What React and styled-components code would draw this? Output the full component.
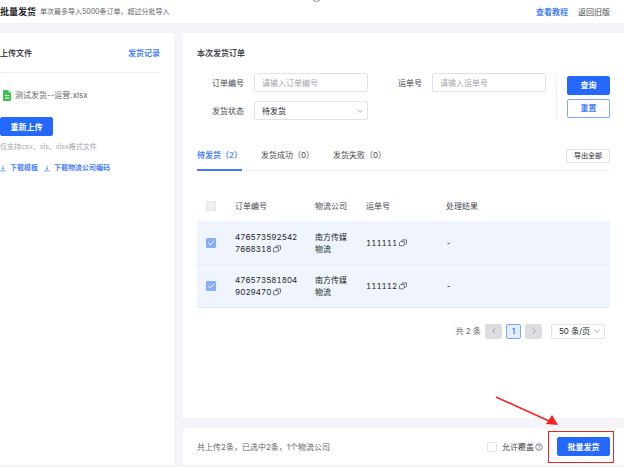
import React from "react";
import styled, { createGlobalStyle, css } from "styled-components";

const colors = {
  blue: "#2468fe",
  link: "#4a83f8",
  page: "#f4f4f9",
  text: "#45484d",
  dark: "#24272c",
  muted: "#64666b",
  placeholder: "#a2a4a9",
  border: "#e2e3e6",
  line: "#f0f0f2",
  selected: "#f0f4fc",
  red: "#fb2020",
};

const GlobalStyle = createGlobalStyle`
  * {
    box-sizing: border-box;
  }
  body {
    margin: 0;
    background: white;
    color: ${colors.text};
  }
  body, button, input, select {
    font-family: Inter, "Noto Sans CJK SC", sans-serif;
    font-size: 8px;
    line-height: 12px;
  }
  a {
    text-decoration: none;
  }
`;

const Page = styled.div`
  display: flex;
  flex-direction: column;
  min-height: 100vh;
  padding-right: 5px;
`;
const Header = styled.header`
  position: relative;
  display: flex;
  align-items: center;
  height: 23px;
  padding-right: 14px;
  overflow: hidden;
`;
const PageTitle = styled.h1`
  margin: 0 4px 0 0;
  font-size: 9px;
  font-weight: 600;
  color: ${colors.dark};
`;
const Subtitle = styled.span`
  flex: 1;
  font-size: 7px;
  color: ${colors.muted};
`;
const HeaderNav = styled.nav`
  display: flex;
  gap: 10px;
`;
const Link = styled.a`
  color: ${(props) => (props.$plain ? colors.text : colors.link)};
  font-weight: ${(props) => (props.$plain ? 400 : 600)};
`;
const Ring = styled.span`
  position: absolute;
  top: -7px;
  left: 50%;
  width: 9px;
  height: 9px;
  border: 1px solid #85878b;
  border-radius: 50%;
`;
const Body = styled.div`
  flex: 1;
  display: flex;
  gap: 9px;
  padding: 10px 0 2px;
  background: ${colors.page};
`;
const Sidebar = styled.aside`
  flex: none;
  width: 174px;
  padding-right: 14px;
  background: white;
`;
const SideHead = styled.div`
  display: flex;
  align-items: center;
  justify-content: space-between;
  height: 40px;
  border-bottom: 1px solid ${colors.line};
`;
const SectionTitle = styled.h2`
  margin: 0;
  font-size: 8px;
  font-weight: 600;
  color: ${colors.text};
`;
const FileRow = styled.div`
  display: flex;
  align-items: center;
  gap: 4px;
  height: 44px;
  padding-left: 3px;
  color: ${colors.muted};
`;
const Button = styled.button`
  display: block;
  width: ${(props) => (props.$wide ? "53px" : "43px")};
  height: 19px;
  padding: 0;
  border: 1px solid ${colors.blue};
  border-radius: 2px;
  background: ${colors.blue};
  color: white;
  font-weight: 600;
  ${(props) =>
    props.$outline &&
    css`
      border-color: #7fa6fa;
      background: white;
      color: ${colors.link};
    `}
`;
const Hint = styled.p`
  margin: 5px 0 9px;
  font-size: 7px;
  color: ${colors.placeholder};
`;
const Downloads = styled.div`
  display: flex;
  gap: 6px;
`;
const DownloadLink = styled.a`
  display: flex;
  align-items: center;
  gap: 4px;
  font-size: 7px;
  font-weight: 600;
  color: ${colors.link};
`;
const Main = styled.main`
  flex: 1;
  min-width: 0;
  display: flex;
  flex-direction: column;
  gap: 10px;
`;
const Card = styled.section`
  flex: 1;
  padding: 0 14px;
  background: white;
`;
const CardHead = styled.div`
  display: flex;
  align-items: center;
  height: 40px;
`;
const Search = styled.form`
  display: flex;
  gap: 10px;
`;
const Fields = styled.div`
  flex: 1;
  display: grid;
  grid-template-columns: 47px 1fr 44px 1fr;
  gap: 9px 10px;
  align-items: center;
`;
const Label = styled.label`
  text-align: right;
`;
const Input = styled.input`
  width: 100%;
  min-width: 0;
  height: 19px;
  padding: 0 7px;
  border: 1px solid ${colors.border};
  border-radius: 2px;
  color: ${colors.dark};
  &::placeholder {
    color: ${colors.placeholder};
  }
`;
const SelectBox = styled.div`
  display: grid;
  align-items: center;
  > * {
    grid-area: 1 / 1;
  }
  svg {
    justify-self: end;
    margin-right: 5px;
    pointer-events: none;
  }
`;
const Select = styled.select`
  appearance: none;
  width: 100%;
  height: ${(props) => (props.$small ? "15px" : "19px")};
  padding: 0 7px;
  border: 1px solid ${colors.border};
  border-radius: 2px;
  background: white;
  color: ${colors.dark};
`;
const Actions = styled.div`
  display: flex;
  flex-direction: column;
  justify-content: center;
  gap: 4px;
  padding-left: 10px;
  border-left: 1px solid ${colors.line};
`;
const TabBar = styled.div`
  display: flex;
  align-items: center;
  height: 30px;
  margin-top: 21px;
  border-bottom: 1px solid ${colors.line};
`;
const Tabs = styled.div`
  flex: 1;
  display: flex;
  gap: 19px;
`;
const Tab = styled.button`
  height: 31px;
  padding: 0;
  border: 0;
  border-bottom: 2px solid transparent;
  background: none;
  color: ${colors.text};
  white-space: nowrap;
  ${(props) =>
    props.$active &&
    css`
      border-color: #3f7bfa;
      color: ${colors.link};
      font-weight: 600;
    `}
`;
const ExportButton = styled.button`
  width: 44px;
  height: 14px;
  padding: 0;
  border: 1px solid ${colors.border};
  border-radius: 1px;
  background: white;
  color: ${colors.dark};
  font-size: 7px;
`;
const Table = styled.table`
  width: 100%;
  margin-top: 19px;
  border-collapse: collapse;
  table-layout: fixed;
  font-variant-numeric: tabular-nums;
`;
const Col = styled.col`
  width: ${(props) => props.$width};
`;
const HeadCell = styled.th`
  height: 31px;
  padding: 0;
  font-weight: 400;
  text-align: left;
`;
const Row = styled.tr`
  height: 43px;
  background: ${colors.selected};
  color: ${colors.dark};
  border-bottom: 1px solid #e9edf5;
`;
const Cell = styled.td`
  padding: 1px 17px 0 0;
  word-break: break-all;
  ${(props) => props.$tight && "padding-right: 12px;"}
`;
const CheckCell = styled.td`
  padding: 1px 0 0 9px;
`;
const CheckBox = styled.span`
  display: grid;
  place-items: center;
  width: 10px;
  height: 10px;
  > * {
    grid-area: 1 / 1;
  }
  input {
    appearance: none;
    width: 10px;
    height: 10px;
    margin: 0;
    border: 1px solid ${colors.border};
    border-radius: 1px;
    background: white;
  }
  input:disabled {
    background: #eff0f1;
  }
  input:checked {
    border-color: #85aefb;
    background: #85aefb;
  }
  svg {
    z-index: 1;
    pointer-events: none;
  }
`;
const CopyButton = styled.button`
  display: inline-block;
  padding: 0;
  margin-left: 2px;
  border: 0;
  background: none;
  color: #53565b;
  vertical-align: -1px;
  svg {
    display: block;
  }
`;
const Pagination = styled.nav`
  display: flex;
  align-items: center;
  justify-content: flex-end;
  gap: 4px;
  margin-top: 16px;
  padding-right: 5px;
`;
const Total = styled.span`
  color: ${colors.muted};
`;
const PageButton = styled.button`
  display: grid;
  place-items: center;
  width: 17px;
  height: 15px;
  padding: 0;
  border: 0;
  border-radius: 2px;
  background: #dcdde1;
  color: #aaadb3;
  ${(props) =>
    props.$current &&
    css`
      width: 15px;
      border: 1px solid #7ba5fb;
      background: #e5eeff;
      color: ${colors.blue};
      font-weight: 500;
    `}
`;
const PageSize = styled(SelectBox)`
  width: 54px;
  margin-left: 5px;
`;
const Footer = styled.footer`
  display: flex;
  align-items: center;
  height: 37px;
  padding: 0 14px;
  background: white;
`;
const Summary = styled.span`
  flex: 1;
  color: ${colors.muted};
`;
const Overwrite = styled.label`
  display: flex;
  align-items: center;
  gap: 5px;
  margin-right: 14px;
`;
const OverwriteText = styled.span`
  display: flex;
  align-items: center;
  gap: 1px;
`;
const Marked = styled.div`
  position: relative;
`;
const Frame = styled.span`
  position: absolute;
  inset: -6px -4px -7px -9px;
  border: 1px solid ${colors.red};
  pointer-events: none;
`;
const Arrow = styled.svg`
  position: absolute;
  right: 51px;
  bottom: 30px;
  pointer-events: none;
`;

const FileIcon = () => (
  <svg width="8" height="11" viewBox="0 0 8 11">
    <path d="M1 0h4.5L8 2.6V10a1 1 0 0 1-1 1H1a1 1 0 0 1-1-1V1a1 1 0 0 1 1-1z" fill="#38c252" />
    <path d="M5.3 0v2.8H8" fill="#a5e5b1" />
    <path d="M1.8 5.5h4.4M1.8 8h4.4" stroke="white" strokeWidth="1" />
  </svg>
);

const DownloadIcon = () => (
  <svg width="6" height="7" viewBox="0 0 6 7" fill="none" stroke={colors.link} strokeWidth="0.8">
    <path d="M3 .6v3.6M.4 5.9h5.2" />
    <path d="M1.6 3.2h2.8L3 4.8z" fill={colors.link} stroke="none" />
  </svg>
);

const Chevron = ({ direction = "down" }) => {
  const angle = { down: 0, left: 90, right: -90 }[direction];
  return (
    <svg width="6" height="6" viewBox="0 0 6 6" fill="none" stroke="#8e9197" strokeWidth="0.8">
      <path d="M.4 1.7 3 4.4l2.6-2.7" transform={`rotate(${angle} 3 3)`} />
    </svg>
  );
};

const CopyIcon = () => (
  <svg width="8" height="8" viewBox="0 0 8 8" fill="none" stroke="currentColor" strokeWidth="0.8">
    <path d="M1.4 2.6h3.9v3.3l-.9.9H.5V3.5z" strokeLinejoin="round" />
    <path d="M2.500 2.500 3.300.900h4.200v3.600l-.9.9H5.400" strokeLinejoin="round" />
  </svg>
);

const HelpIcon = () => (
  <svg width="8" height="8" viewBox="0 0 8 8" fill="none" stroke="#55585d" strokeWidth="0.7">
    <circle cx="4" cy="4" r="3.3" />
    <path d="M2.9 2.9c.2-1 2.2-1 2.2.1C5.1 3.8 4 3.7 4 4.7M4 5.4v.7" />
  </svg>
);

const Tick = () => (
  <svg width="8" height="8" viewBox="0 0 8 8" fill="none" stroke="white" strokeWidth="1">
    <path d="M1.3 3.9 3.3 5.8 6.8 2.2" />
  </svg>
);

const Copy = () => (
  <CopyButton type="button" aria-label="复制">
    <CopyIcon />
  </CopyButton>
);

const orders = [
  { id: "4765735925427668318", company: "南方传媒物流", waybill: "111111", result: "-" },
  { id: "4765735818049029470", company: "南方传媒物流", waybill: "111112", result: "-" },
];

const OrderTable = () => (
  <Table>
    <colgroup>
      <Col $width="38px" />
      <Col $width="80px" />
      <Col $width="51px" />
      <Col $width="80px" />
      <Col />
    </colgroup>
    <thead>
      <tr>
        <CheckCell as="th">
          <CheckBox>
            <input type="checkbox" aria-label="全选" disabled />
          </CheckBox>
        </CheckCell>
        <HeadCell>订单编号</HeadCell>
        <HeadCell>物流公司</HeadCell>
        <HeadCell>运单号</HeadCell>
        <HeadCell>处理结果</HeadCell>
      </tr>
    </thead>
    <tbody>
      {orders.map((order) => (
        <Row key={order.id}>
          <CheckCell>
            <CheckBox>
              <input type="checkbox" aria-label={order.id} defaultChecked />
              <Tick />
            </CheckBox>
          </CheckCell>
          <Cell>
            {order.id}
            <Copy />
          </Cell>
          <Cell $tight>{order.company}</Cell>
          <Cell>
            {order.waybill}
            <Copy />
          </Cell>
          <Cell>{order.result}</Cell>
        </Row>
      ))}
    </tbody>
  </Table>
);

const App = () => {
  return (
    <Page>
      <GlobalStyle />
      <Header>
        <Ring />
        <PageTitle>批量发货</PageTitle>
        <Subtitle>单次最多导入5000条订单，超过分批导入</Subtitle>
        <HeaderNav>
          <Link href="#guide">查看教程</Link>
          <Link href="#old" $plain>
            返回旧版
          </Link>
        </HeaderNav>
      </Header>
      <Body>
        <Sidebar>
          <SideHead>
            <SectionTitle>上传文件</SectionTitle>
            <Link href="#records">发货记录</Link>
          </SideHead>
          <FileRow>
            <FileIcon />
            测试发货--运营.xlsx
          </FileRow>
          <Button type="button" $wide>
            重新上传
          </Button>
          <Hint>仅支持csv、xls、xlsx格式文件</Hint>
          <Downloads>
            <DownloadLink href="#template">
              <DownloadIcon />
              下载模板
            </DownloadLink>
            <DownloadLink href="#codes">
              <DownloadIcon />
              下载物流公司编码
            </DownloadLink>
          </Downloads>
        </Sidebar>
        <Main>
          <Card>
            <CardHead>
              <SectionTitle>本次发货订单</SectionTitle>
            </CardHead>
            <Search>
              <Fields>
                <Label htmlFor="order">订单编号</Label>
                <Input id="order" placeholder="请输入订单编号" />
                <Label htmlFor="waybill">运单号</Label>
                <Input id="waybill" placeholder="请输入运单号" />
                <Label htmlFor="status">发货状态</Label>
                <SelectBox>
                  <Select id="status">
                    <option>待发货</option>
                  </Select>
                  <Chevron />
                </SelectBox>
              </Fields>
              <Actions>
                <Button type="button">查询</Button>
                <Button type="reset" $outline>
                  重置
                </Button>
              </Actions>
            </Search>
            <TabBar>
              <Tabs>
                <Tab $active>待发货（2）</Tab>
                <Tab>发货成功（0）</Tab>
                <Tab>发货失败（0）</Tab>
              </Tabs>
              <ExportButton type="button">导出全部</ExportButton>
            </TabBar>
            <OrderTable />
            <Pagination>
              <Total>共 2 条</Total>
              <PageButton aria-label="上一页">
                <Chevron direction="left" />
              </PageButton>
              <PageButton $current>1</PageButton>
              <PageButton aria-label="下一页">
                <Chevron direction="right" />
              </PageButton>
              <PageSize>
                <Select $small aria-label="每页条数">
                  <option>50 条/页</option>
                </Select>
                <Chevron />
              </PageSize>
            </Pagination>
          </Card>
          <Footer>
            <Summary>共上传2条，已选中2条，1个物流公司</Summary>
            <Overwrite>
              <CheckBox>
                <input type="checkbox" />
              </CheckBox>
              <OverwriteText>
                允许覆盖
                <HelpIcon />
              </OverwriteText>
            </Overwrite>
            <Marked>
              <Button type="button" $wide>
                批量发货
              </Button>
              <Frame />
              <Arrow width="64" height="30" viewBox="0 0 64 30">
                <path d="M1 1 54 25" stroke={colors.red} strokeWidth="1.5" />
                <path d="M57 19 63 29 51 28z" fill={colors.red} />
              </Arrow>
            </Marked>
          </Footer>
        </Main>
      </Body>
    </Page>
  );
};

export default App;
